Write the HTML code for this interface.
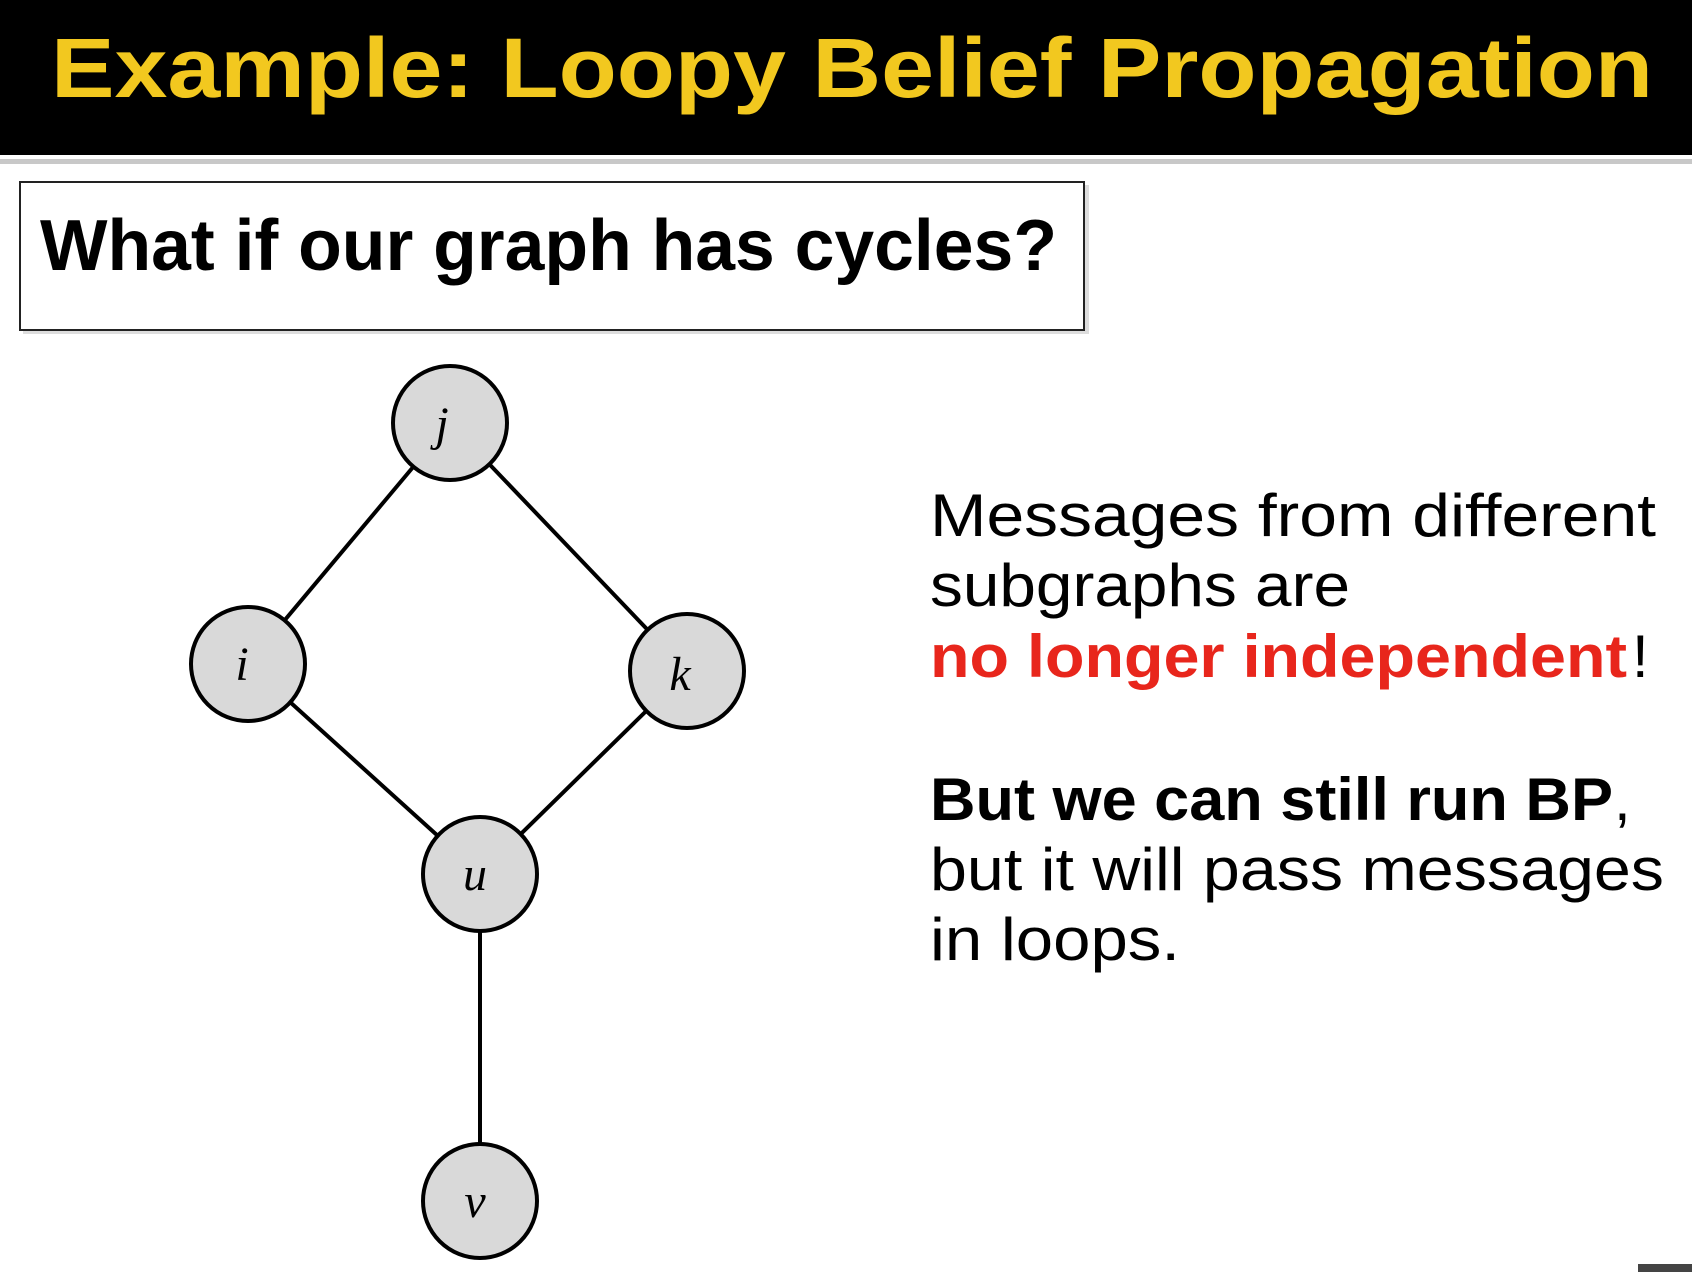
<!DOCTYPE html>
<html><head><meta charset="utf-8"><style>
html,body{margin:0;padding:0;background:#fff;}
svg{display:block;}
text{font-family:"Liberation Sans",sans-serif;}
</style></head><body>
<svg width="1692" height="1272" viewBox="0 0 1692 1272" xmlns="http://www.w3.org/2000/svg">
<rect x="0" y="0" width="1692" height="155" fill="#000"/>
<rect x="0" y="159" width="1692" height="5" fill="#c8c8c8"/>
<text x="51" y="97" font-size="84" font-weight="bold" fill="#f2c81f" textLength="1602" lengthAdjust="spacingAndGlyphs">Example: Loopy Belief Propagation</text>
<rect x="23" y="185" width="1066" height="149" fill="#bbb" opacity="0.5"/>
<rect x="20" y="182" width="1064" height="148" fill="#fff" stroke="#222" stroke-width="2"/>
<text x="40" y="270" font-size="72" font-weight="bold" fill="#000" textLength="1017" lengthAdjust="spacingAndGlyphs">What if our graph has cycles?</text>
<g stroke="#000" stroke-width="4">
<line x1="450" y1="423" x2="248" y2="664"/>
<line x1="450" y1="423" x2="687" y2="671"/>
<line x1="248" y1="664" x2="480" y2="874"/>
<line x1="687" y1="671" x2="480" y2="874"/>
<line x1="480" y1="874" x2="480" y2="1201"/>
</g>
<g fill="#d9d9d9" stroke="#000" stroke-width="4">
<circle cx="450" cy="423" r="57"/>
<circle cx="248" cy="664" r="57"/>
<circle cx="687" cy="671" r="57"/>
<circle cx="480" cy="874" r="57"/>
<circle cx="480" cy="1201" r="57"/>
</g>
<g font-style="italic" font-size="48" fill="#000" text-anchor="middle">
<text x="442" y="440" style="font-family:'Liberation Serif',serif">j</text>
<text x="242" y="680" style="font-family:'Liberation Serif',serif">i</text>
<text x="680" y="690" style="font-family:'Liberation Serif',serif">k</text>
<text x="475" y="890" style="font-family:'Liberation Serif',serif">u</text>
<text x="475" y="1217" style="font-family:'Liberation Serif',serif">v</text>
</g>
<g font-size="60" fill="#000">
<text x="930" y="536" textLength="726" lengthAdjust="spacingAndGlyphs">Messages from different</text>
<text x="930" y="606" textLength="420" lengthAdjust="spacingAndGlyphs">subgraphs are</text>
<text x="930" y="677" fill="#e8261c" font-weight="bold" textLength="697" lengthAdjust="spacingAndGlyphs">no longer independent</text>
<text x="1632" y="677">!</text>
<text x="930" y="820" font-weight="bold" textLength="683" lengthAdjust="spacingAndGlyphs">But we can still run BP</text>
<text x="1614" y="820">,</text>
<text x="930" y="890" textLength="734" lengthAdjust="spacingAndGlyphs">but it will pass messages</text>
<text x="930" y="960" textLength="250" lengthAdjust="spacingAndGlyphs">in loops.</text>
</g>
<rect x="1638" y="1264" width="54" height="8" fill="#444"/>
</svg>
</body></html>
